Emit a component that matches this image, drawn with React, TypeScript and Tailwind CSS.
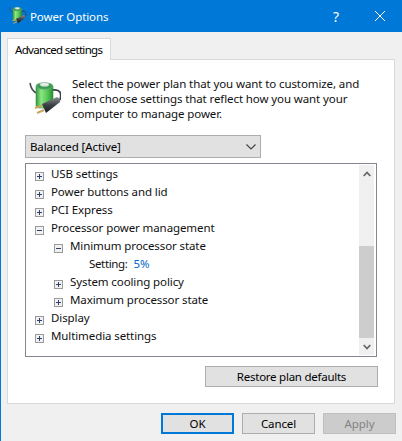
const font = { fontFamily: '"Noto Sans", "Open Sans", sans-serif' };

function BatteryIcon({ className, id }: { className: string; id: string }) {
  return (
    <svg viewBox="0 0 34 38" className={className}>
      <defs>
        <linearGradient id={id + "b"} x1="0" x2="1" y1="0" y2="0">
          <stop offset="0" stopColor="#2f9a3f" />
          <stop offset="0.3" stopColor="#8fe584" />
          <stop offset="0.7" stopColor="#4fc452" />
          <stop offset="1" stopColor="#2a8a38" />
        </linearGradient>
        <linearGradient id={id + "p"} x1="0" x2="0" y1="0" y2="1">
          <stop offset="0" stopColor="#8a9094" />
          <stop offset="0.5" stopColor="#3c4145" />
          <stop offset="1" stopColor="#1b1e20" />
        </linearGradient>
      </defs>
      <path d="M3 3 C4 9 6 12 10 13" fill="none" stroke="#4a5259" strokeWidth="1.6" />
      <path d="M26 10 C33 9 35 13 33 20" fill="none" stroke="#3a4046" strokeWidth="1.8" />
      <path d="M9 6 H26 V25 Q26 28 23 28 H12 Q9 28 9 25 Z" fill={"url(#" + id + "b)"} stroke="#37923f" strokeWidth="0.6" />
      <ellipse cx="17.5" cy="6" rx="8.5" ry="3.4" fill="#3d9c57" stroke="#7fbf88" strokeWidth="0.5" />
      <ellipse cx="17.5" cy="4.5" rx="4.5" ry="2" fill="#e6ece6" stroke="#9fb0a2" strokeWidth="0.4" />
      <path d="M15 24 L30 17 Q34 19 33 22 L19 33 Z" fill={"url(#" + id + "p)"} />
      <path d="M8 28 L15 25.5" stroke="#c9a55f" strokeWidth="2" />
      <path d="M10 33 L17 30" stroke="#c9a55f" strokeWidth="2" />
    </svg>
  );
}

function Expander({ open }: { open?: boolean }) {
  return (
    <svg viewBox="0 0 9 9" className="w-[9px] h-[9px] shrink-0 mt-1">
      <rect x="0.5" y="0.5" width="8" height="8" fill="#f1f1f1" stroke="#9a9a9a" />
      <path d={open ? "M2 4.5H7" : "M2 4.5H7M4.5 2V7"} stroke="#2f3f6f" strokeWidth="1" />
    </svg>
  );
}

function Row({ label, level, open }: { label: string; level: 0 | 1; open?: boolean }) {
  return (
    <div className={level === 0 ? "h-[18px] flex items-center pl-[9px]" : "h-[18px] flex items-center pl-7"}>
      <Expander open={open} />
      <span className="ml-[7px] mb-[2px] text-[#101010]">{label}</span>
    </div>
  );
}

function Button({ children, className }: { children: string; className: string }) {
  return <div className={"flex items-center justify-center " + className}>{children}</div>;
}

export default function App() {
  return (
    <div style={font} className="w-[402px] h-[441px] overflow-hidden bg-[#f0f0f0] border-l border-[#0078d7] text-[11.5px] leading-[15px] tracking-[-0.1px] text-black flex flex-col">
      <div className="h-8 shrink-0 bg-[#0078d7] text-white flex items-center pl-[6px]">
        <BatteryIcon id="s" className="w-[20px] h-[20px]" />
        <span className="ml-[3px]">Power Options</span>
        <span className="ml-auto mr-[36px] text-[14px]">?</span>
        <svg viewBox="0 0 10 10" className="w-[10px] h-[10px] mr-[17px]">
          <path d="M0 0L10 10M10 0L0 10" stroke="#fff" strokeWidth="1" />
        </svg>
      </div>

      <div className="ml-[6px] mt-[6px] w-[104px] h-[22px] shrink-0 bg-white border border-b-0 border-[#d9d9d9] pl-[7px] flex items-center relative z-10 whitespace-nowrap tracking-[-0.68px]">
        Advanced settings
      </div>

      <div className="ml-[6px] -mt-px w-[388px] h-[345px] shrink-0 bg-white border border-[#d9d9d9] pl-[17px] flex flex-col">
        <div className="flex mt-[15px] h-[60px] shrink-0">
          <BatteryIcon id="l" className="w-[34px] h-[38px] ml-[2px] mt-[5px]" />
          <p className="ml-[11px] mt-px w-[300px] text-[#101010]">
            Select the power plan that you want to customize, and then choose settings that reflect how you want your computer to manage power.
          </p>
        </div>

        <div className="w-[236px] h-[23px] shrink-0 bg-[#e1e1e1] border border-[#adadad] flex items-center pl-1 pr-[3px]">
          Balanced [Active]
          <svg viewBox="0 0 10 6" className="ml-auto mr-[1px] w-[10px] h-[6px]">
            <path d="M0.5 0.5L5 5L9.5 0.5" fill="none" stroke="#444" strokeWidth="1.2" />
          </svg>
        </div>

        <div className="mt-[5px] w-[352px] h-[194px] shrink-0 border border-[#828790] bg-white flex">
          <div className="flex-1 pt-px">
            <Row label="USB settings" level={0} />
            <Row label="Power buttons and lid" level={0} />
            <Row label="PCI Express" level={0} />
            <Row label="Processor power management" level={0} open />
            <Row label="Minimum processor state" level={1} open />
            <div className="h-[18px] flex items-center pl-[63px]">
              <span className="mb-[2px] text-[#101010] tracking-[-0.35px]">Setting:</span>
              <span className="ml-[6px] mb-[2px] text-[#0066cc]">5%</span>
            </div>
            <Row label="System cooling policy" level={1} />
            <Row label="Maximum processor state" level={1} />
            <Row label="Display" level={0} />
            <Row label="Multimedia settings" level={0} />
          </div>
          <div className="w-[15px] mr-[2px] my-px bg-[#f0f0f0] flex flex-col">
            <div className="h-[17px] flex items-center justify-center">
              <svg viewBox="0 0 8 6" className="w-2 h-[6px]">
                <path d="M0.7 5L4 1.5L7.3 5" fill="none" stroke="#606060" strokeWidth="1.6" />
              </svg>
            </div>
            <div className="mt-[64px] h-[92px] bg-[#cdcdcd]" />
            <div className="h-[17px] flex items-center justify-center">
              <svg viewBox="0 0 8 6" className="w-2 h-[6px]">
                <path d="M0.7 1L4 4.5L7.3 1" fill="none" stroke="#606060" strokeWidth="1.6" />
              </svg>
            </div>
          </div>
        </div>

        <Button className="mt-[9px] ml-[180px] w-[173px] h-[21px] shrink-0 bg-[#e1e1e1] border border-[#adadad] tracking-[-0.25px]">
          Restore plan defaults
        </Button>
      </div>

      <div className="mt-[9px] ml-[160px] flex gap-2">
        <Button className="w-[73px] h-[21px] bg-[#e1e1e1] border-2 border-[#0078d7]">OK</Button>
        <Button className="w-[73px] h-[21px] bg-[#e1e1e1] border border-[#adadad]">Cancel</Button>
        <Button className="w-[73px] h-[21px] bg-[#cccccc] border border-[#bfbfbf] text-[#838383]">Apply</Button>
      </div>
    </div>
  );
}
